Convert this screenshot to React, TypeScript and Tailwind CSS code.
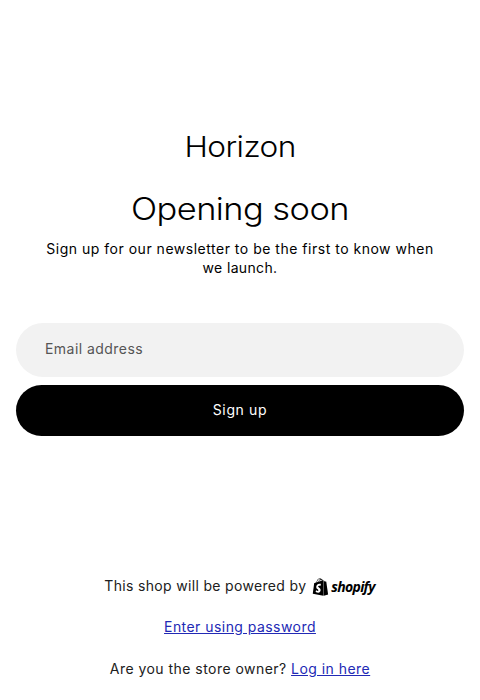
import { FaShopify } from "react-icons/fa";

export default function App() {
  return (
    <div className="flex h-[700px] w-full flex-col bg-white px-4 font-['Inter',sans-serif] text-[14px] leading-[19px] text-black">
      <header className="mt-[129px] flex h-9 items-center justify-center">
        <h1 className="scale-x-[1.09] text-[29px] font-[360] leading-9 tracking-[-0.5px]">Horizon</h1>
      </header>
      <main className="flex flex-col">
        <h2 className="mt-[24px] scale-x-[1.11] text-center text-[31px] font-[360] leading-10 tracking-[-0.5px]">Opening soon</h2>
        <p className="mt-2.5 text-center tracking-[0.51px]">
          Sign up for our newsletter to be the first to know when
          <br />
          <span className="tracking-[0.35px]">we launch.</span>
        </p>
        <form className="mt-[46px] flex flex-col gap-2" onSubmit={(e) => e.preventDefault()}>
          <input
            type="email"
            aria-label="Email address"
            placeholder="Email address"
            className="h-[54px] rounded-full bg-[#f2f2f2] px-[29px] pb-1 tracking-[0.45px] outline-none placeholder:text-[#555555]"
          />
          <button className="h-[51px] rounded-full bg-black pb-0.5 tracking-[0.65px] text-white">Sign up</button>
        </form>
      </main>
      <footer className="mt-[140px] flex flex-col items-center text-[#202020]">
        <div className="flex h-5 items-center">
          <span className="mb-0.5 tracking-[0.33px]">This shop will be powered by</span>
          <span className="ml-1.5 mr-px mt-0.5 flex h-5 items-center text-black">
            <FaShopify className="h-[18px] w-[17px]" />
            <span className="ml-0.5 font-['Open_Sans',sans-serif] text-[14px] font-bold italic leading-5 tracking-[-0.7px]">shopify</span>
          </span>
        </div>
        <a href="#password" className="mt-[21px] tracking-[0.45px] text-[#2229b5] underline">Enter using password</a>
        <p className="mt-[23px] tracking-[0.46px]">
          Are you the store owner? <a href="#login" className="text-[#2229b5] underline">Log in here</a>
        </p>
      </footer>
    </div>
  );
}
